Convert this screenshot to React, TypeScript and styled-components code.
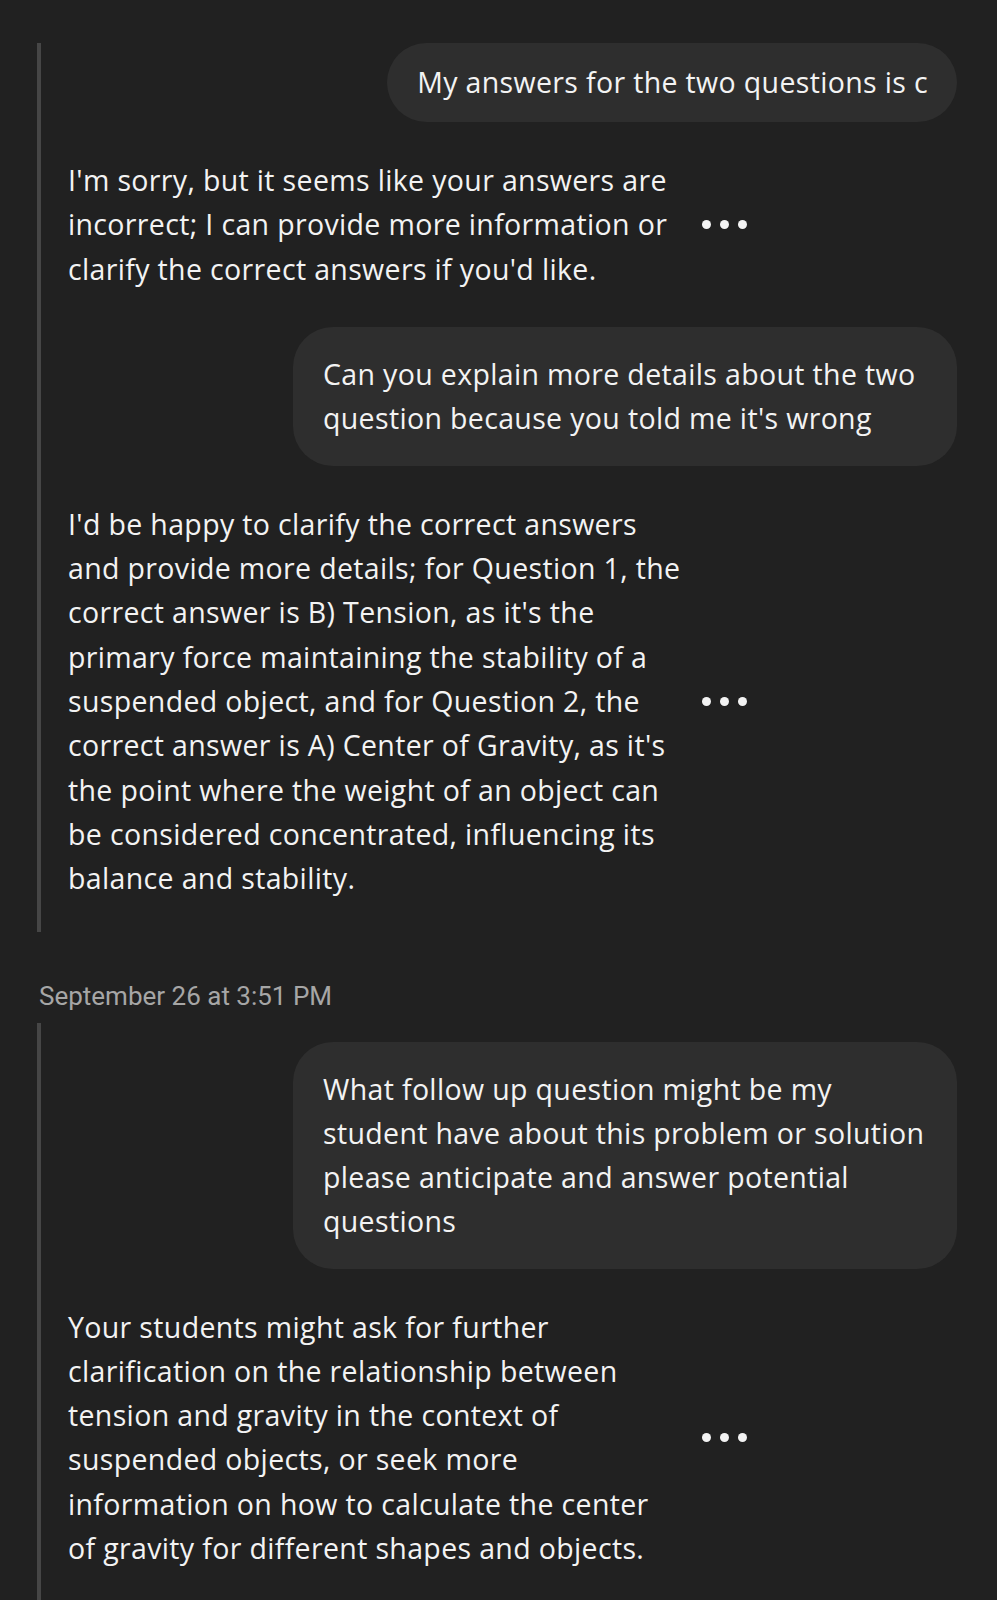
import React from 'react';
import styled, { createGlobalStyle } from 'styled-components';

const GlobalStyle = createGlobalStyle`
  html, body {
    margin: 0;
    padding: 0;
    background: #212121;
  }
  body {
    font-family: 'Open Sans', 'Noto Sans', sans-serif;
    color: #f3f3f3;
    -webkit-font-smoothing: antialiased;
  }
`;

const Page = styled.div`
  display: flex;
  flex-direction: column;
  padding-top: 43px;
  min-height: 1557px;
`;

const Thread = styled.section<{ $top: number; $bottom: number }>`
  display: flex;
  flex-direction: column;
  gap: 36px;
  margin-left: 37px;
  padding: ${(p) => p.$top}px 40px ${(p) => p.$bottom}px 0;
  border-left: 4px solid #464646;
`;

const UserRow = styled.div`
  display: flex;
  justify-content: flex-end;
`;

const Bubble = styled.div<{ $wide?: boolean; $compact?: boolean }>`
  box-sizing: border-box;
  width: ${(p) => (p.$wide ? '664px' : 'auto')};
  padding: ${(p) => (p.$compact ? '17px 29px 18px 30px' : '25px 30px 26px')};
  border-radius: 40px;
  background: #2e2e2e;
  font-size: 28.5px;
  font-weight: 500;
  line-height: 44px;
  letter-spacing: 0.35px;
  white-space: nowrap;
`;

const BotRow = styled.div`
  display: flex;
  align-items: center;
  gap: 24px;
  padding-left: 27px;
`;

const BotText = styled.p`
  margin: 0;
  width: 610px;
  font-size: 28.5px;
  font-weight: 400;
  line-height: 44.3px;
  letter-spacing: 0.35px;
  white-space: nowrap;
`;

const Dots = styled.div`
  display: flex;
  gap: 9px;
  span {
    width: 9px;
    height: 9px;
    border-radius: 50%;
    background: #f3f3f3;
  }
`;

const Stamp = styled.div`
  padding: 49px 0 12px 39px;
  font-family: Roboto, 'Open Sans', sans-serif;
  font-size: 26px;
  line-height: 30px;
  color: #a6a6a6;
`;

function Lines({ lines }: { lines: string[] }) {
  return (
    <>
      {lines.map((l, i) => (
        <React.Fragment key={i}>
          {l}
          {i < lines.length - 1 && <br />}
        </React.Fragment>
      ))}
    </>
  );
}

function UserMessage({ lines, wide, compact }: { lines: string[]; wide?: boolean; compact?: boolean }) {
  return (
    <UserRow>
      <Bubble $wide={wide} $compact={compact}>
        <Lines lines={lines} />
      </Bubble>
    </UserRow>
  );
}

function BotMessage({ lines }: { lines: string[] }) {
  return (
    <BotRow>
      <BotText>
        <Lines lines={lines} />
      </BotText>
      <Dots>
        <span />
        <span />
        <span />
      </Dots>
    </BotRow>
  );
}

export default function App() {
  return (
    <>
      <GlobalStyle />
      <Page>
        <Thread $top={0} $bottom={31}>
          <UserMessage compact lines={['My answers for the two questions is c']} />
          <BotMessage
            lines={[
              "I'm sorry, but it seems like your answers are",
              'incorrect; I can provide more information or',
              "clarify the correct answers if you'd like.",
            ]}
          />
          <UserMessage
            wide
            lines={[
              'Can you explain more details about the two',
              "question because you told me it's wrong",
            ]}
          />
          <BotMessage
            lines={[
              "I'd be happy to clarify the correct answers",
              'and provide more details; for Question 1, the',
              "correct answer is B) Tension, as it's the",
              'primary force maintaining the stability of a',
              'suspended object, and for Question 2, the',
              "correct answer is A) Center of Gravity, as it's",
              'the point where the weight of an object can',
              'be considered concentrated, influencing its',
              'balance and stability.',
            ]}
          />
        </Thread>
        <Stamp>September 26 at 3:51 PM</Stamp>
        <Thread $top={19} $bottom={30}>
          <UserMessage
            wide
            lines={[
              'What follow up question might be my',
              'student have about this problem or solution',
              'please anticipate and answer potential',
              'questions',
            ]}
          />
          <BotMessage
            lines={[
              'Your students might ask for further',
              'clarification on the relationship between',
              'tension and gravity in the context of',
              'suspended objects, or seek more',
              'information on how to calculate the center',
              'of gravity for different shapes and objects.',
            ]}
          />
        </Thread>
      </Page>
    </>
  );
}
